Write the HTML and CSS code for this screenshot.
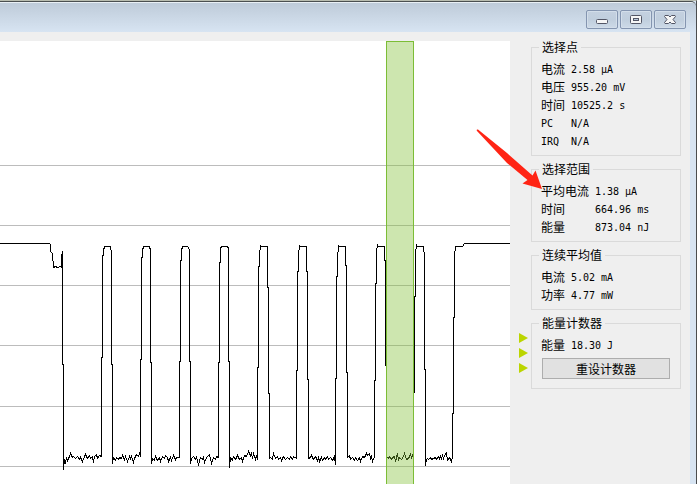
FILE: index.html
```html
<!DOCTYPE html>
<html lang="zh-CN">
<head>
<meta charset="utf-8">
<title>电流监测</title>
<link rel="stylesheet" href="styles.css">
</head>
<body>
<div class="window">
  <header class="titlebar">
    <button class="caption" type="button" aria-label="最小化">
      <svg width="12" height="10" viewBox="0 0 12 10"><rect x=".5" y="4.500" width="11" height="4" rx="1" fill="#f6f6f6" stroke="#535666"/></svg>
    </button>
    <button class="caption" type="button" aria-label="最大化">
      <svg width="12" height="10" viewBox="0 0 12 10"><rect x=".5" y=".5" width="11" height="8" rx="1" fill="#f6f6f6" stroke="#535666"/><rect x="3.500" y="3.500" width="5" height="2" fill="#b9c9dc" stroke="#535666"/></svg>
    </button>
    <button class="caption" type="button" aria-label="关闭">
      <svg width="12" height="10" viewBox="0 0 12 10"><path d="M1 .5H4.500L6 2 7.500 .5H11L11.500 1.500 9 4.500 11.500 7.500 11 8.500H7.500L6 7 4.500 8.500H1L.5 7.500 3 4.500 .5 1.500Z" fill="#f6f6f6" stroke="#535666"/></svg>
    </button>
  </header>
  <main class="client">
    <svg class="chart" viewBox="0 41 510 443" preserveAspectRatio="xMinYMin slice" role="img" aria-label="电流曲线">
      <g class="grid"><path d="M0 165.500H900M0 225.500H900M0 285.500H900M0 345.500H900M0 406.500H900M0 466.500H900"/></g>
      <g class="trace" transform="translate(.5 .5)">
        <path d="M-2 243H49L50 244V251L52 253 53 267 55 266 57 267 60 266 61 267V257L62 251V364H63V469L64 459 65 462 66 458 67 460 69 456 70 453 72 457 73 456 75 458 77 456 79 459 80 457 82 461 84 456 85 454 87 458 89 455 90 458 92 456 93 462 94 456 96 454 97 458 99 455 101 456V357H102V255H103V250L104 246H110L111 253V364H112V463L113 457 115 460 116 457 118 459 119 457 121 458 122 455 124 459 125 456 127 461 129 456 130 458 131 456 133 462 134 458 136 454 138 456 139 453 140 456V359H141V257H142V250L143 246H149L150 250V362H151V463L152 458 154 460 155 456 157 460 159 457 160 461 162 456 164 458 165 455 167 457 168 461 170 457 171 460 173 455 175 459 176 457 179 457V361H180V260H181V250L182 246H187L189 249V361H190V463L191 458 193 456 195 459 196 457 198 464 200 457 202 459 203 457 204 462 206 457 208 455 209 454 211 463 213 457 215 459 216 456 218 457V362H219V262H220V248L221 246H227L228 248V361H229V467L230 457 232 460 233 456 235 459 237 455 239 459 241 457 242 461 244 455 246 456 248 451 250 455 251 452 252 458 253 453 255 459 256 455 257 459V367H258V266H259V254L260 245 261 246H267V287H268V393H269V458L270 457 272 459 273 453 275 458 277 456 278 459 280 457 281 460 283 456 285 459 287 457 289 459 290 456 292 459 293 456 296 458V370H297V271H298V254L299 245V246H306V271H307V379H308V458L310 457 311 455 313 459 315 456 317 460 318 457 319 461 321 457 322 460 324 457 325 459 327 456 328 459 330 457 332 460 334 456 335 464V378H336V276H337V258L338 245V246H345V265H346V372H347V457L349 455 350 459 352 457 354 460 355 457 357 460 359 457 360 461 362 456 364 457 366 453 367 455 369 453 370 458 371 456 372 461 374 456V380H375V283H376V252L377 244V246H384V260H385V365M387 457 388 458 389 456 391 459 392 457 394 456 395 461 397 453 398 460 399 457 401 459 403 456 404 453 406 459 408 458 410 454 411 457 412 455 413 457M414 392V296H415V253L416 244V246H423L424 257V369H425V465L426 459 427 458 428 459 430 457 431 459 433 458 435 457 436 459 438 456 439 458 440 456 441 458 442 455 443 458 445 453 446 452 447 460 449 457 451 461 452 456V413H453V317H454V254L455 247V246H462L464 243H900"/>
      </g>
      <rect class="selection" x="386.500" y="41.500" width="27" height="600"/>
    </svg>
    <div class="rail" aria-hidden="true"><i></i><i></i><i></i></div>
    <aside class="panel">
      <fieldset>
        <legend>选择点</legend>
        <dl>
          <dt>电流</dt><dd>2.58 µA</dd>
          <dt>电压</dt><dd>955.20 mV</dd>
          <dt>时间</dt><dd>10525.2 s</dd>
          <dt class="latin">PC</dt><dd>N/A</dd>
          <dt class="latin">IRQ</dt><dd>N/A</dd>
        </dl>
      </fieldset>
      <fieldset>
        <legend>选择范围</legend>
        <dl class="wide">
          <dt>平均电流</dt><dd>1.38 µA</dd>
          <dt>时间</dt><dd>664.96 ms</dd>
          <dt>能量</dt><dd>873.04 nJ</dd>
        </dl>
      </fieldset>
      <fieldset>
        <legend>连续平均值</legend>
        <dl>
          <dt>电流</dt><dd>5.02 mA</dd>
          <dt>功率</dt><dd>4.77 mW</dd>
        </dl>
      </fieldset>
      <fieldset>
        <legend>能量计数器</legend>
        <dl>
          <dt>能量</dt><dd>18.30 J</dd>
        </dl>
        <button class="reset" type="button">重设计数器</button>
      </fieldset>
      <svg class="pointer" width="66" height="60" viewBox="476 129 66 60" aria-hidden="true"><path d="M477 131Q476 129 478 129.500L507 153 532.500 175.500 535.500 170.500 542 189 522.500 183.500 527.500 180 507 163Z" fill="#ff2414"/></svg>
    </aside>
  </main>
</div>
</body>
</html>
```
FILE: styles.css
```css
* {
  box-sizing: border-box;
}

body {
  margin: 0;
  background: #4a4d4f;
  color: #000;
  font-family: "Noto Sans CJK SC", sans-serif;
  font-size: 12px;
  line-height: 18px;
}

.window {
  display: flex;
  flex-direction: column;
  height: 100vh;
  border-top: 1px solid #b9bdb0;
  border-right: 1px solid #4a4d4f;
  background: #d7e4f2;
}

.titlebar {
  display: flex;
  flex: none;
  justify-content: flex-end;
  gap: 2px;
  height: 31px;
  padding: 8px 10px 0 0;
  border-top: 1px solid #4a4f50;
  border-top-right-radius: 5px;
  background: linear-gradient(#e9f0f5 1px, #becbd9 1px, #d7e4f2);
}

.caption {
  display: flex;
  align-items: center;
  justify-content: center;
  width: 32px;
  height: 19px;
  padding: 0;
  border: 1px solid #8495b0;
  border-radius: 2px;
  background: linear-gradient(#c4d1e0, #c0cedd 50%, #cddae8);
  box-shadow: inset 0 0 0 1px #d3deea;
}

.client {
  display: flex;
  flex: 1;
  min-height: 0;
  margin-right: 6px;
  padding-top: 9px;
  background: #efefef;
}

.chart {
  flex: 1;
  min-width: 0;
  height: 100%;
  background: #fff;
  shape-rendering: crispEdges;
}

.grid {
  stroke: #bcbcbc;
}

.trace {
  fill: none;
  stroke: #000;
}

.selection {
  fill: rgba(130, 193, 55, .4);
  stroke: #7cbd36;
}

.rail {
  display: flex;
  flex-direction: column;
  gap: 5px;
  width: 21px;
  padding: 292px 0 0 9px;
}

.rail i {
  border: 5px solid transparent;
  border-right: 0;
  border-left: 9px solid #bbd500;
  width: 9px;
}

.panel {
  position: relative;
  display: flex;
  flex-direction: column;
  gap: 6px;
  width: 150px;
  margin: -1px 9px 0 0;
}

fieldset {
  min-width: 0;
  margin: 0;
  padding: 6px 9px 5px;
  border: 1px solid #dadada;
}

fieldset:last-of-type {
  padding-bottom: 9px;
}

legend {
  margin-left: -2px;
  padding: 0 3px;
  line-height: 14px;
}

dl {
  display: grid;
  grid-template-columns: 30px 1fr;
  margin: 0;
}

.wide {
  grid-template-columns: 54px 1fr;
}

dt,
dd {
  height: 18px;
  margin: 0;
  white-space: nowrap;
}

dd,
.latin {
  font-family: "DejaVu Sans Mono", monospace;
  font-size: 10px;
  line-height: 20px;
}

.reset {
  display: block;
  width: calc(100% - 2px);
  height: 21px;
  margin: 4px 1px 0;
  padding: 0;
  border: 1px solid #adadad;
  background: #e1e1e1;
  color: #000;
  font-family: inherit;
  font-size: 12px;
  line-height: 18px;
}

.pointer {
  position: absolute;
  top: 89px;
  left: -55px;
}
```
